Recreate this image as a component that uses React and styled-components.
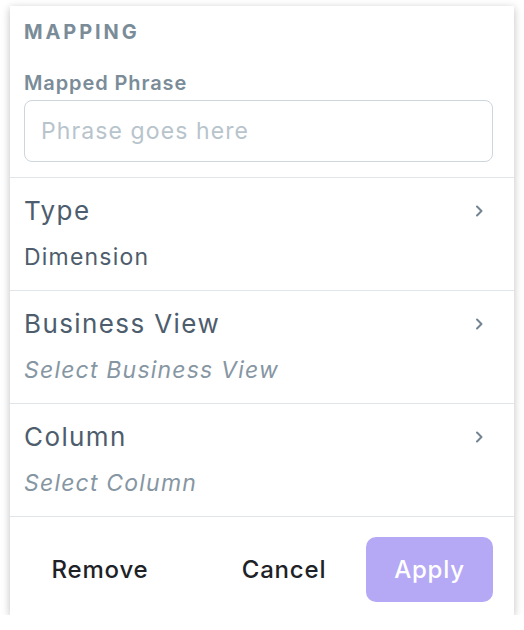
import React from "react";
import styled, { createGlobalStyle } from "styled-components";

const Global = createGlobalStyle`
  body {
    margin: 0;
    background: #fff;
    font-family: Inter, "Noto Sans", sans-serif;
  }
`;

const Card = styled.div`
  width: 504px;
  margin: 6px 0 0 10px;
  background: #fff;
  box-shadow: 0 2px 8px rgba(0, 0, 0, 0.25);
  display: flex;
  flex-direction: column;
`;

const Header = styled.div`
  padding: 15px 21px 15px 14px;
  border-bottom: 1px solid #e1e6ea;
`;

const Heading = styled.div`
  font-size: 20px;
  font-weight: 700;
  letter-spacing: 2.9px;
  color: #7b8c99;
  line-height: 22px;
`;

const Label = styled.div`
  margin-top: 29px;
  font-size: 20px;
  font-weight: 600;
  letter-spacing: 0.9px;
  color: #7b8c99;
  line-height: 22px;
`;

const Input = styled.input`
  box-sizing: border-box;
  display: block;
  width: 100%;
  height: 62px;
  margin-top: 6px;
  padding: 0 16px;
  border: 1px solid #cdd6dc;
  border-radius: 8px;
  font-family: inherit;
  font-size: 23px;
  letter-spacing: 1.1px;
  color: #4a5a6a;
  outline: none;
  &::placeholder {
    color: #b8c4cc;
  }
`;

const Section = styled.div`
  height: 113px;
  box-sizing: border-box;
  padding: 16px 30px 0 14px;
  border-bottom: 1px solid #e1e6ea;
`;

const TitleRow = styled.div`
  display: flex;
  align-items: center;
  justify-content: space-between;
`;

const Title = styled.div`
  font-size: 26px;
  letter-spacing: 1.4px;
  line-height: 34px;
  color: #4d5d6d;
`;

const Value = styled.div`
  margin-top: 16px;
  font-size: 23px;
  letter-spacing: 1.2px;
  line-height: 26px;
  color: ${(p) => (p.$empty ? "#8696a3" : "#4d5d6d")};
  font-style: ${(p) => (p.$empty ? "italic" : "normal")};
`;

const Footer = styled.div`
  display: flex;
  align-items: center;
  padding: 20px 21px 13px 14px;
`;

const TextButton = styled.button`
  flex-shrink: 0;
  border: none;
  background: none;
  font-family: inherit;
  font-size: 24px;
  font-weight: 500;
  letter-spacing: 0.8px;
  color: #1e2226;
  padding: 0;
  width: ${(p) => p.$w}px;
  margin-left: ${(p) => p.$ml || 0}px;
  height: 65px;
`;

const PrimaryButton = styled.button`
  flex-shrink: 0;
  margin-left: auto;
  width: 127px;
  height: 65px;
  border: none;
  border-radius: 10px;
  background: #b5a9f5;
  color: #fff;
  font-family: inherit;
  font-size: 24px;
  font-weight: 500;
  letter-spacing: 0.8px;
`;

const Chevron = () => (
  <svg width="10" height="14" viewBox="0 0 10 14">
    <path d="M3 2.5l4.5 4.5-4.5 4.5" fill="none" stroke="#728492" strokeWidth="2" strokeLinecap="round" strokeLinejoin="round" />
  </svg>
);

const rows = [
  { title: "Type", value: "Dimension" },
  { title: "Business View", value: "Select Business View", empty: true },
  { title: "Column", value: "Select Column", empty: true },
];

export default function App() {
  return (
    <>
      <Global />
      <Card>
        <Header>
          <Heading>MAPPING</Heading>
          <Label>Mapped Phrase</Label>
          <Input placeholder="Phrase goes here" />
        </Header>
        {rows.map((r) => (
          <Section key={r.title}>
            <TitleRow>
              <Title>{r.title}</Title>
              <Chevron />
            </TitleRow>
            <Value $empty={r.empty}>{r.value}</Value>
          </Section>
        ))}
        <Footer>
          <TextButton $w={152}>Remove</TextButton>
          <TextButton $w={160} $ml={28}>Cancel</TextButton>
          <PrimaryButton>Apply</PrimaryButton>
        </Footer>
      </Card>
    </>
  );
}
